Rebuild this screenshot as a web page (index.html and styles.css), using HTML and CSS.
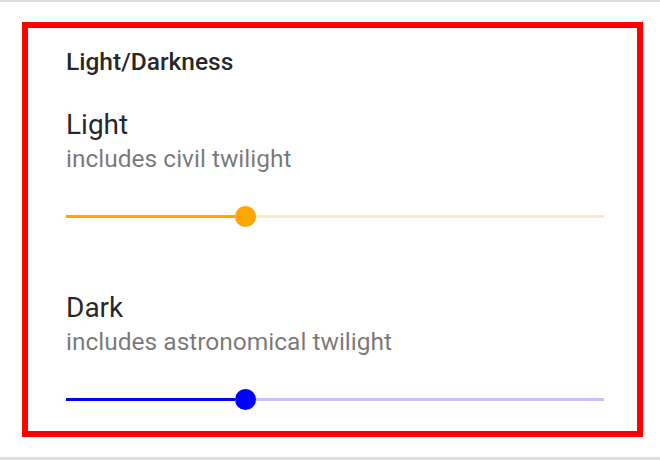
FILE: index.html
```html
<!DOCTYPE html>
<html lang="en">
<head>
<meta charset="utf-8">
<title>Light/Darkness</title>
<link rel="stylesheet" href="styles.css">
</head>
<body>
<div class="divider divider-top"></div>
<div class="wrap">
  <section class="panel">
    <h2 class="heading">Light/Darkness</h2>
    <div class="setting">
      <div class="primary">Light</div>
      <div class="secondary">includes civil twilight</div>
      <div class="slider slider-light">
        <span class="track-active" style="width: 169px"></span>
        <span class="thumb"></span>
        <span class="track-rest"></span>
      </div>
    </div>
    <div class="setting setting-dark">
      <div class="primary">Dark</div>
      <div class="secondary">includes astronomical twilight</div>
      <div class="slider slider-dark">
        <span class="track-active" style="width: 169px"></span>
        <span class="thumb"></span>
        <span class="track-rest"></span>
      </div>
    </div>
  </section>
</div>
<div class="divider divider-bottom"></div>
</body>
</html>
```
FILE: styles.css
```css
html, body {
  margin: 0;
  padding: 0;
  background: #ffffff;
  font-family: Roboto, "Noto Sans", sans-serif;
}

.divider {
  background: #e0e0e0;
}

.divider-top {
  height: 2px;
}

.divider-bottom {
  height: 3px;
}

.wrap {
  padding: 20px 17px 20px 22px;
}

.panel {
  box-sizing: border-box;
  width: 621px;
  height: 415px;
  border: 6px solid #ff0000;
  padding: 19px 33px 0 38px;
  display: flex;
  flex-direction: column;
}

.heading {
  margin: 0;
  font-size: 24.5px;
  font-weight: 500;
  line-height: 29px;
  color: rgba(0, 0, 0, 0.87);
}

.setting {
  display: flex;
  flex-direction: column;
}

.primary {
  margin-top: 33px;
  font-size: 28px;
  line-height: 32px;
  color: rgba(0, 0, 0, 0.87);
}

.setting-dark .primary {
  margin-top: 65px;
}

.secondary {
  margin-top: 4px;
  font-size: 24.5px;
  line-height: 28px;
  color: rgba(0, 0, 0, 0.54);
}

.slider {
  margin-top: 33px;
  display: flex;
  align-items: center;
  height: 21px;
}

.track-active {
  height: 3px;
  flex: none;
}

.track-rest {
  flex: 1;
  height: 3px;
}

.thumb {
  width: 21px;
  height: 21px;
  border-radius: 50%;
  flex: none;
}

.slider-light .track-active,
.slider-light .thumb {
  background: #ffa500;
}

.slider-light .track-rest {
  background: rgba(255, 165, 0, 0.24);
}

.slider-dark .track-active,
.slider-dark .thumb {
  background: #0000ff;
}

.slider-dark .track-rest {
  background: rgba(0, 0, 255, 0.24);
}
```
